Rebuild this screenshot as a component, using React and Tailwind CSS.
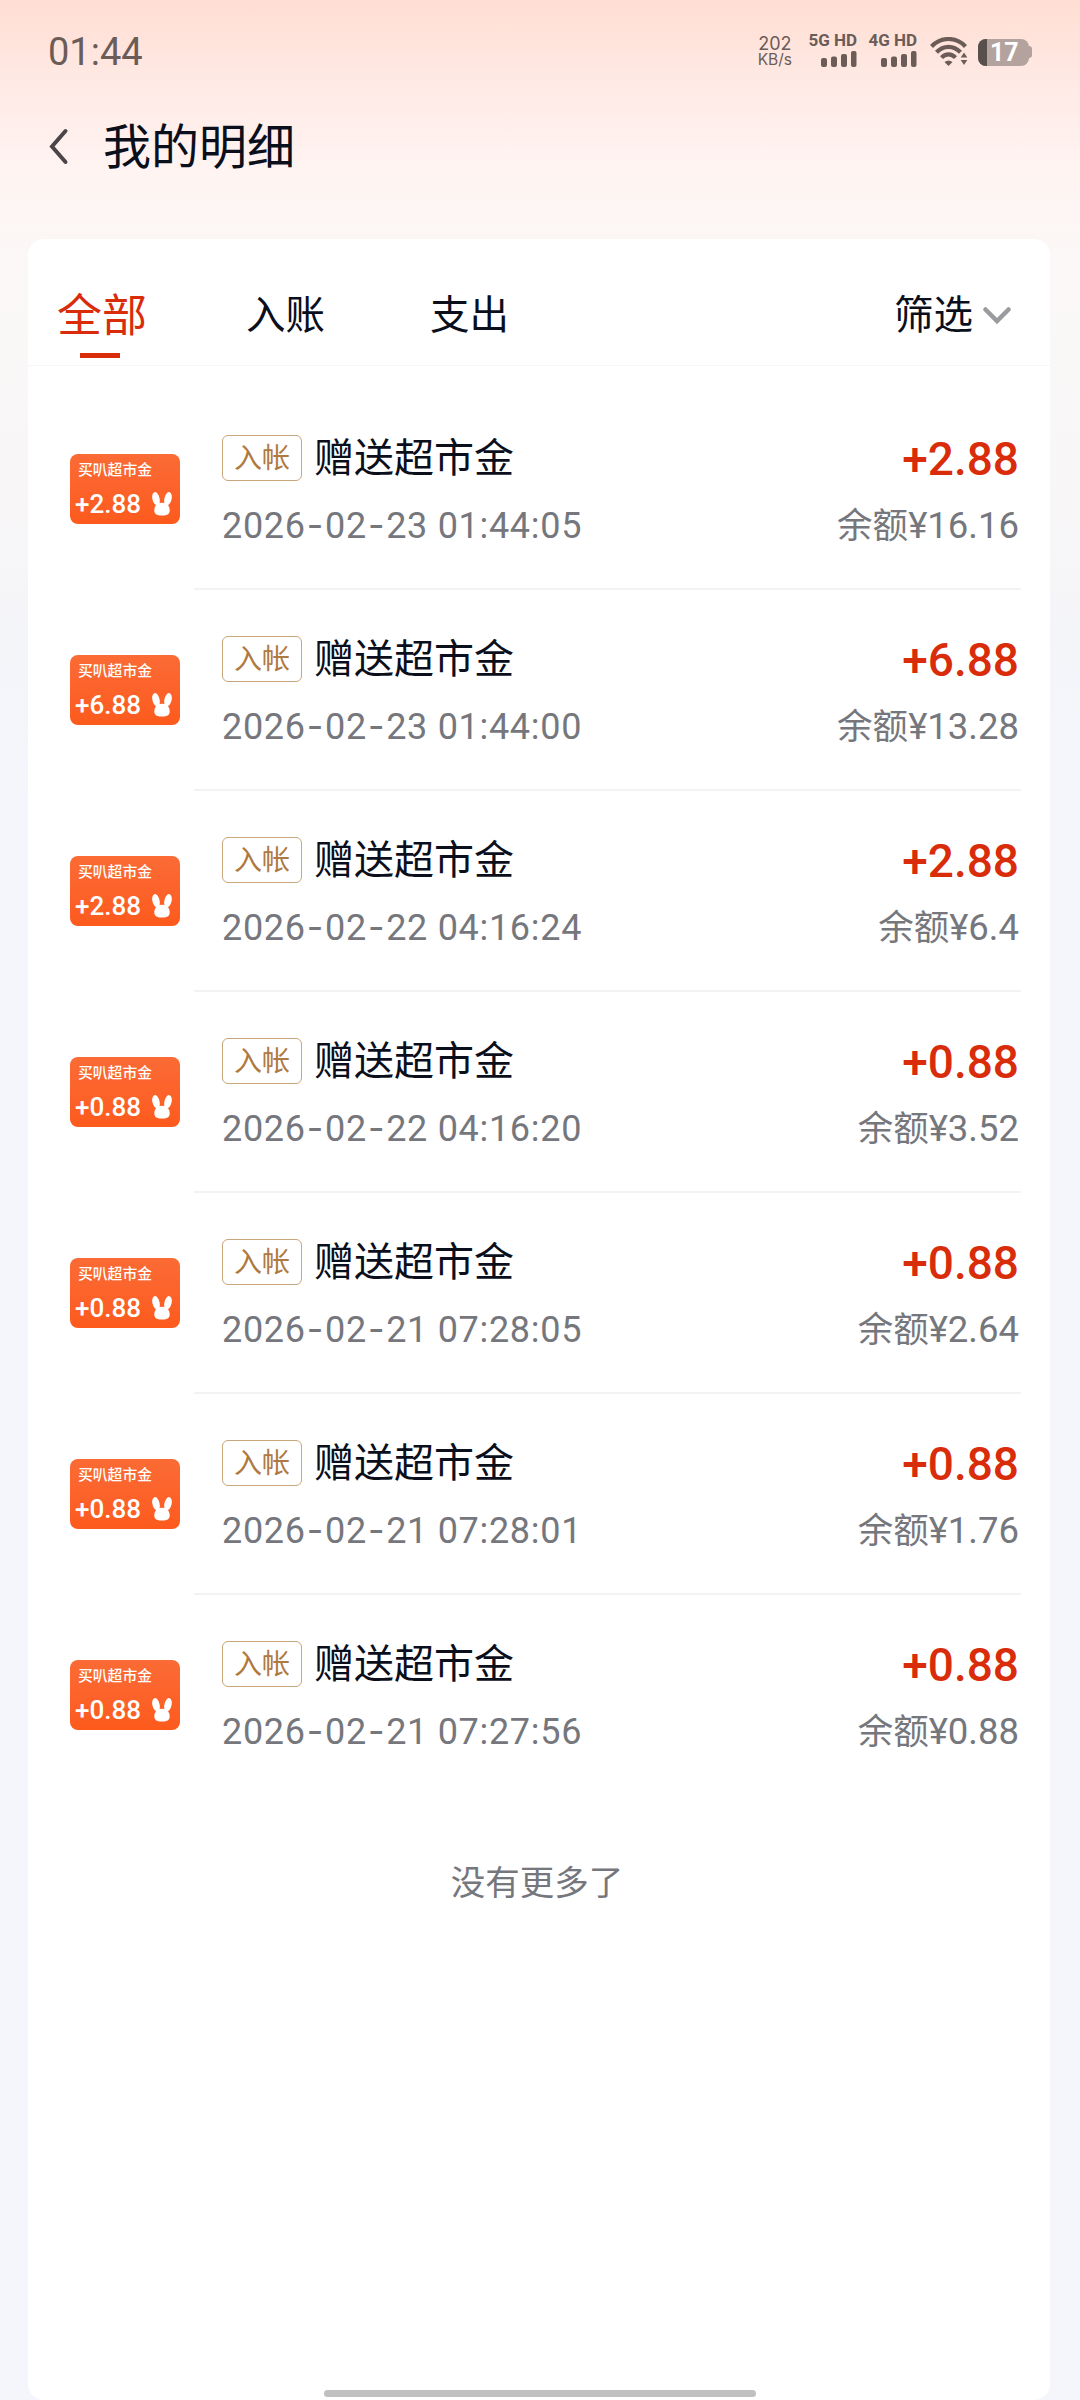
import { Fragment } from "react";
import clsx from "clsx";

const records = [
  { amount: "+2.88", time: "2026-02-23 01:44:05", balance: "16.16" },
  { amount: "+6.88", time: "2026-02-23 01:44:00", balance: "13.28" },
  { amount: "+2.88", time: "2026-02-22 04:16:24", balance: "6.4" },
  { amount: "+0.88", time: "2026-02-22 04:16:20", balance: "3.52" },
  { amount: "+0.88", time: "2026-02-21 07:28:05", balance: "2.64" },
  { amount: "+0.88", time: "2026-02-21 07:28:01", balance: "1.76" },
  { amount: "+0.88", time: "2026-02-21 07:27:56", balance: "0.88" },
];

const Signal = ({ label }) => (
  <div className="flex w-[49px] flex-col items-end">
    <span className="text-[17px] leading-[15px] font-bold whitespace-nowrap font-['Roboto',sans-serif]">
      {label}
    </span>
    <svg width="36" height="16" viewBox="0 0 36 16" className="mt-[3px]" fill="currentColor">
      <rect x="0" y="7" width="6" height="9" rx="2" />
      <rect x="10" y="5.5" width="6" height="10.5" rx="2" />
      <rect x="20" y="3" width="6" height="13" rx="2" />
      <rect x="30" y="0" width="5.5" height="16" rx="2" />
    </svg>
  </div>
);

const Wifi = () => (
  <svg width="38" height="30" viewBox="0 0 38 30" fill="none" stroke="currentColor">
    <path d="M1.5 9.5C11 -0.5 26 -0.5 35.5 9.5" strokeWidth="4.2" />
    <path d="M6.5 15.2C13.5 8 23.5 8 30.5 15.2" strokeWidth="4.2" />
    <path d="M11.5 20.6C15.5 16.4 21.5 16.4 25.5 20.6" strokeWidth="4.2" />
    <path d="M14.5 25Q18.5 22 22.5 25L18.5 29Z" fill="currentColor" stroke="none" />
    <path d="M34 15.5L37.3 20.5H30.7ZM34 28L37.3 23H30.7Z" fill="currentColor" stroke="none" />
  </svg>
);

const Battery = ({ level }) => (
  <div className="flex items-center">
    <div className="flex h-[27px] w-[51px] items-center overflow-hidden rounded-lg bg-[#b3a29d]">
      <div className="h-full w-[9px] bg-[#57504d]" />
      <span className="ml-[3px] text-[25px] leading-none font-bold text-white font-['Roboto',sans-serif]">
        {level}
      </span>
    </div>
    <div className="h-3 w-[3px] rounded-r-sm bg-[#b3a29d]" />
  </div>
);

const StatusBar = () => (
  <div className="flex h-[104px] items-center justify-between pr-12 pl-12 text-[#6b5c57]">
    <span className="text-[38px] leading-none font-['Roboto',sans-serif]">01:44</span>
    <div className="flex items-center">
      <div className="mr-4 flex flex-col items-center pb-px leading-none">
        <span className="text-[18px] leading-[17px]">202</span>
        <span className="text-[15.5px] leading-[16px]">KB/s</span>
      </div>
      <div className="mr-[11px] pb-1">
        <Signal label="5G HD" />
      </div>
      <div className="mr-[13px] pb-1">
        <Signal label="4G HD" />
      </div>
      <div className="mr-2.5">
        <Wifi />
      </div>
      <Battery level={17} />
    </div>
  </div>
);

const Rabbit = () => (
  <svg width="20" height="24" viewBox="0 0 20 24" fill="#fff" className="shrink-0">
    <ellipse cx="4" cy="6.8" rx="3.6" ry="6.8" transform="rotate(-13 4 6.8)" />
    <ellipse cx="16" cy="6.8" rx="3.6" ry="6.8" transform="rotate(13 16 6.8)" />
    <path d="M5 12Q10 9.6 15 12C17.2 14 18 17 17.6 19.5C17.1 22.6 14 23.6 10 23.6C6 23.6 2.9 22.6 2.4 19.5C2 17 2.8 14 5 12Z" />
  </svg>
);

const Coupon = ({ amount }) => (
  <div className="mt-[65px] ml-[42px] h-[70px] w-[110px] shrink-0 rounded-lg bg-linear-to-b from-[#fb6b35] to-[#fd5a1c] pt-2 text-white">
    <div className="pl-2 text-[14.8px] leading-4 font-medium">买叭超市金</div>
    <div className="mt-[13px] flex items-center justify-between pr-2 pl-[5px]">
      <span className="pt-px text-[26px] leading-6 font-medium font-['Roboto',sans-serif]">
        {amount}
      </span>
      <Rabbit />
    </div>
  </div>
);

// Hyphens get a wider face than the digits
const Timestamp = ({ value }) => (
  <div className="mt-[23px] text-[36px] leading-[42px] tracking-[0.7px] text-[#75777d] font-['Roboto',sans-serif]">
    {value.split("-").map((part, i) => (
      <Fragment key={i}>
        {i > 0 && <span className="px-px font-['Inter',sans-serif]">-</span>}
        {part}
      </Fragment>
    ))}
  </div>
);

const RecordRow = ({ record, last }) => (
  <div className="flex h-[201px]">
    <Coupon amount={record.amount} />
    <div
      className={clsx(
        "mr-[29px] ml-[14px] flex flex-1 justify-between border-b-2 pl-[28px]",
        last ? "border-transparent" : "border-[#f2f3f5]"
      )}
    >
      <div>
        <div className="mt-[46px] flex h-[46px] items-center">
          <span className="flex h-[46px] w-20 items-center justify-center rounded-md border border-[#c9a67c] text-[28px] leading-none text-[#b0793f]">
            入帐
          </span>
          <span className="ml-3 text-[40px] leading-none text-[#0b0f1c]">赠送超市金</span>
        </div>
        <Timestamp value={record.time} />
      </div>
      <div className="flex flex-col items-end pr-0.5 font-['Roboto','Noto_Sans_CJK_SC',sans-serif]">
        <div className="mt-[47px] text-[46px] leading-[46px] font-medium text-[#d92c0a]">
          {record.amount}
        </div>
        <div className="mt-[23px] text-[35.5px] leading-[42px] text-[#75777d]">
          余额<span className="text-[36.5px]">¥{record.balance}</span>
        </div>
      </div>
    </div>
  </div>
);

const Tabs = () => (
  <div className="flex h-[127px] items-center border-b border-[#f7f7f8] pt-[27px] pr-[39px] pl-[29px] text-[39.5px] text-[#0b0f1c]">
    <div className="relative text-[45px] leading-[60px] text-[#d92c0a]">
      全部
      <span className="absolute top-[67px] left-[23px] h-[5px] w-10 bg-[#d92c0a]" />
    </div>
    <span className="ml-[99px]">入账</span>
    <span className="ml-[105px]">支出</span>
    <div className="ml-auto flex items-center">
      <span>筛选</span>
      <svg width="28" height="18" viewBox="0 0 28 18" fill="none" className="ml-2.5">
        <path d="M2.5 2.5L14 14L25.5 2.5" stroke="#999b9f" strokeWidth="4.5" strokeLinecap="round" />
      </svg>
    </div>
  </div>
);

export default function App() {
  return (
    <div className="flex h-[2400px] w-[1080px] flex-col bg-[linear-gradient(180deg,#ffded3_0px,#ffe9e4_80px,#fff4f2_170px,#fbf8f7_260px,#f8f6f7_500px,#f4f5f9_640px,#f5f6fb_800px)] font-['Inter','Noto_Sans_CJK_SC',sans-serif]">
      <StatusBar />
      <div className="flex h-[135px] items-start pt-[17px] pl-12">
        <svg width="22" height="40" viewBox="0 0 22 40" fill="none" className="mt-[6px]">
          <path d="M17.5 4L4 19.5L17.5 35" stroke="#4b4549" strokeWidth="4" strokeLinecap="round" />
        </svg>
        <h1 className="mt-0.5 ml-[33px] text-[48px] leading-[48px] text-[#0b0f1c]">我的明细</h1>
      </div>
      <main className="ml-7 flex w-[1022px] flex-1 flex-col rounded-2xl bg-white">
        <Tabs />
        <div className="mt-[23px]">
          {records.map((record, i) => (
            <RecordRow key={record.time} record={record} last={i === records.length - 1} />
          ))}
        </div>
        <p className="mt-[57px] mr-1 text-center text-[34.5px] leading-[60px] text-[#75777d]">
          没有更多了
        </p>
        <div className="mt-auto mb-[3px] ml-[296px] h-[7px] w-[432px] rounded-full bg-[#c0c0c0]" />
      </main>
    </div>
  );
}
